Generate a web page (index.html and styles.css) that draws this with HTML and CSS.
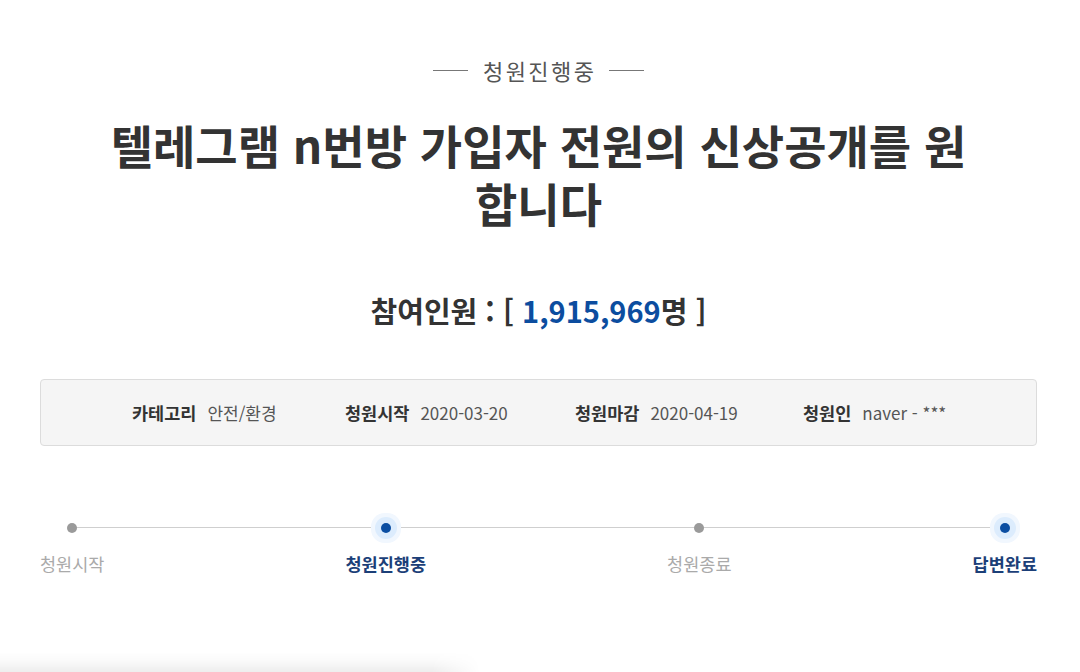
FILE: index.html
```html
<!DOCTYPE html>
<html lang="ko">
<head>
<meta charset="utf-8">
<link rel="stylesheet" href="styles.css">
</head>
<body>
<div class="page">
  <div class="status"><span class="dash"></span><span class="status-text">청원진행중</span><span class="dash"></span></div>
  <h1 class="title">텔레그램 n번방 가입자 전원의 신상공개를 원 합니다</h1>
  <div class="count">참여인원 : [ <span class="num">1,915,969</span>명 ]</div>
  <div class="info">
    <div class="info-item"><b>카테고리</b><span>안전/환경</span></div>
    <div class="info-item"><b>청원시작</b><span>2020-03-20</span></div>
    <div class="info-item"><b>청원마감</b><span>2020-04-19</span></div>
    <div class="info-item"><b>청원인</b><span>naver - ***</span></div>
  </div>
  <div class="steps">
    <div class="step"><span class="dot"></span><span class="label">청원시작</span></div>
    <div class="step on"><span class="dot"></span><span class="label">청원진행중</span></div>
    <div class="step"><span class="dot"></span><span class="label">청원종료</span></div>
    <div class="step on"><span class="dot"></span><span class="label">답변완료</span></div>
  </div>
  <div class="next-shadow"></div>
</div>
</body>
</html>
```
FILE: styles.css
```css
* { box-sizing: border-box; }
html, body { margin: 0; padding: 0; background: #fff; overflow: hidden; }
body { font-family: "Noto Sans CJK KR", "Noto Sans", sans-serif; color: #333; }
.page { width: 1080px; height: 672px; padding: 55px 43px 0 40px; display: flex; flex-direction: column; align-items: stretch; }
.page > * { flex: none; }
.status { display: flex; justify-content: center; align-items: center; gap: 15px; height: 30px; }
.dash { width: 35px; height: 1px; background: #777; }
.status-text { font-size: 22px; color: #555; line-height: 30px; letter-spacing: 2.5px; margin-right: -2.5px; }
.title { margin: 30px auto 0; width: 900px; text-align: center; font-size: 46px; font-weight: 700; line-height: 58px; color: #333; }
.count { margin-top: 59px; text-align: center; font-size: 29px; font-weight: 700; line-height: 40px; color: #333; }
.num { color: #0c4d9f; }
.info { margin-top: 49px; height: 67px; background: #f5f5f5; border: 1px solid #dcdcdc; border-radius: 4px; display: flex; align-items: center; padding-left: 91px; }
.info-item { display: flex; align-items: center; gap: 11px; font-size: 17px; color: #555; }
.info-item b { color: #333; font-weight: 700; font-size: 17.5px; }
.info-item:nth-child(1) { width: 213px; }
.info-item:nth-child(2) { width: 230px; }
.info-item:nth-child(3) { width: 228px; }
.steps { margin-top: 77px; display: flex; justify-content: space-between; position: relative; }
.steps::before { content: ""; position: absolute; left: 32px; right: 32px; top: 4px; height: 1px; background: #cfcfcf; }
.step { display: flex; flex-direction: column; align-items: center; gap: 19px; position: relative; }
.dot { width: 10px; height: 10px; border-radius: 50%; background: #9a9a9a; }
.label { font-size: 17.5px; color: #aaa; line-height: 24px; }
.step.on .dot { background: #0b4ea2; box-shadow: 0 0 0 6px #dcecfd, 0 0 0 10px #f1f7fe; }
.step.on .label { color: #1c3f78; font-weight: 700; }
.next-shadow { margin: auto 0 0 -40px; width: 480px; height: 20px; background: linear-gradient(to bottom, rgba(0,0,0,0), rgba(0,0,0,0.025) 50%, rgba(0,0,0,0.07)); border-top-right-radius: 20px 20px; -webkit-mask-image: linear-gradient(to right, #000 90%, transparent); mask-image: linear-gradient(to right, #000 90%, transparent); }
```
